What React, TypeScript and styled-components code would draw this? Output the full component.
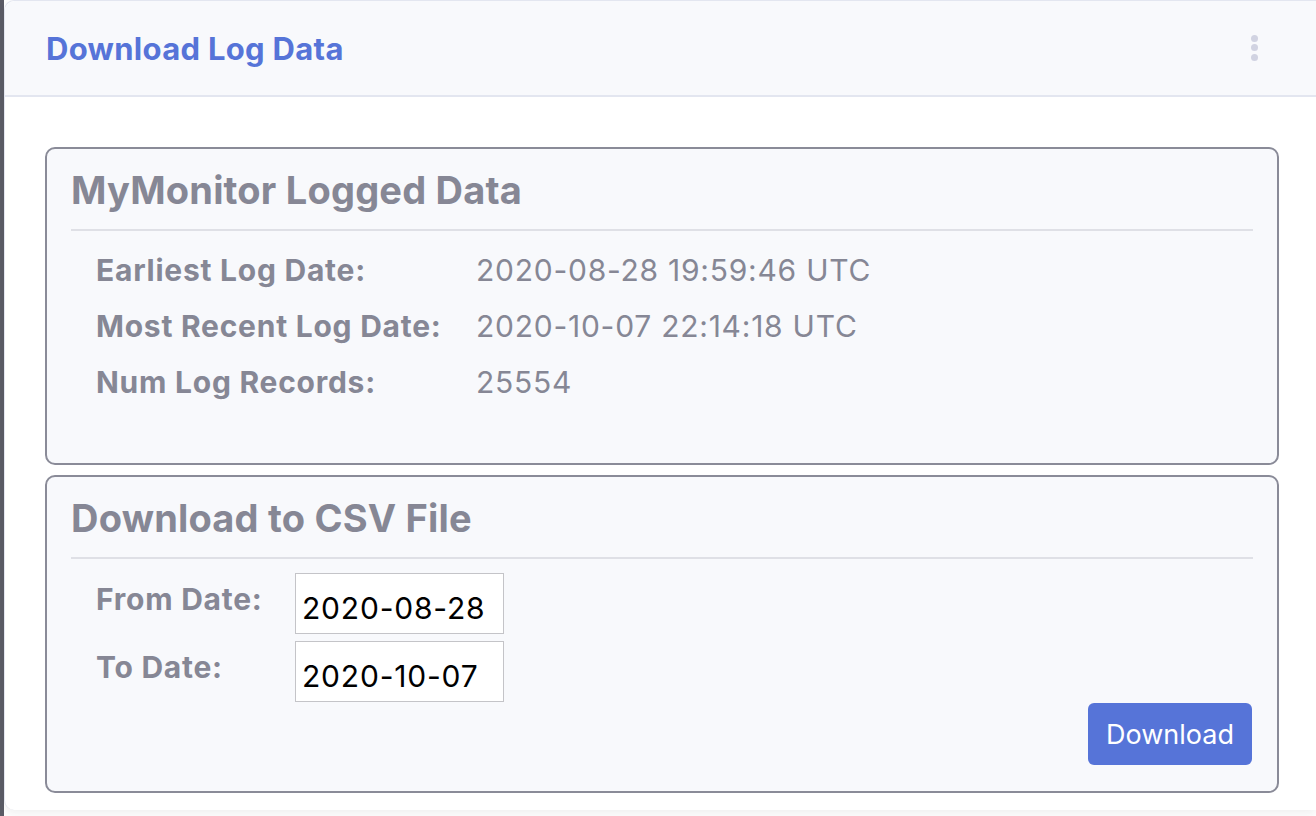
import React from "react";
import styled, { createGlobalStyle } from "styled-components";

const Global = createGlobalStyle`
  html, body { margin: 0; padding: 0; background: #ffffff; }
  body { font-family: Inter, "Noto Sans", sans-serif; -webkit-font-smoothing: antialiased; }
  * { box-sizing: border-box; }
`;

const Page = styled.div`
  display: flex;
  width: 1316px;
  height: 816px;
  overflow: hidden;
  background: #ffffff;
`;

const SideStrip = styled.div`
  width: 4px;
  flex: none;
  background: #5b5c66;
`;

const Card = styled.section`
  flex: 1;
  display: flex;
  flex-direction: column;
  background: #ffffff;
  border-radius: 10px 0 0 10px;
  border-left: 1px solid #e3e6f0;
  border-top: 1px solid #e3e6f0;
  height: 810px;
  box-shadow: 0 4px 10px rgba(58, 59, 69, 0.08);
`;

const CardHeader = styled.header`
  height: 96px;
  flex: none;
  display: flex;
  align-items: center;
  justify-content: space-between;
  padding: 0 58px 0 41px;
  background: #f8f9fc;
  border-bottom: 2px solid #e3e6f0;
  border-top-left-radius: 10px;
`;

const HeaderTitle = styled.h6`
  margin: 0;
  font-size: 31px;
  font-weight: 700;
  color: #5674d8;
  letter-spacing: 0.3px;
`;

const Kebab = styled.div`
  display: flex;
  flex-direction: column;
  gap: 2.5px;
  margin-top: -1px;
`;

const Dot = styled.span`
  width: 7px;
  height: 7px;
  border-radius: 50%;
  background: #d1d3e2;
`;

const CardBody = styled.div`
  display: flex;
  flex-direction: column;
  gap: 10px;
  padding: 50px 37px 12px 40px;
`;

const Panel = styled.div`
  height: 318px;
  border: 2px solid #8a8b98;
  border-radius: 10px;
  background: #f8f9fc;
  padding: 17px 24px 0 24px;
  display: flex;
  flex-direction: column;
`;

const PanelTitle = styled.h4`
  margin: 0;
  font-size: 38px;
  font-weight: 700;
  color: #868795;
  line-height: 48px;
  letter-spacing: 0.2px;
`;

const Rule = styled.hr`
  margin: 15px 0 0;
  border: 0;
  height: 2px;
  background: #dfe0e6;
`;

const InfoList = styled.div`
  display: grid;
  grid-template-columns: 380px 1fr;
  grid-auto-rows: 56px;
  padding: 11px 0 0 25px;
  align-items: center;
`;

const Label = styled.div`
  font-size: 30px;
  font-weight: 700;
  color: #868795;
  letter-spacing: 0.75px;
`;

const Value = styled.div`
  font-size: 30px;
  font-weight: 400;
  color: #868795;
  letter-spacing: 0.75px;
`;

const FormGrid = styled.div`
  display: grid;
  grid-template-columns: 199px 209px;
  row-gap: 7px;
  padding: 14px 0 0 25px;
  align-items: start;
`;

const FormLabel = styled.label`
  font-size: 30px;
  font-weight: 700;
  color: #868795;
  letter-spacing: 0.75px;
  padding-top: 8px;
`;

const DateInput = styled.input`
  width: 209px;
  height: 61px;
  border: 1px solid #c4c4c8;
  background: #ffffff;
  font-family: Inter, "Noto Sans", sans-serif;
  font-size: 30px;
  letter-spacing: 0.8px;
  color: #000000;
  padding: 8px 0 0 6px;
  outline: none;
`;

const Actions = styled.div`
  display: flex;
  justify-content: flex-end;
  margin-top: 1px;
  padding-right: 1px;
`;

const Button = styled.button`
  width: 164px;
  height: 62px;
  border: none;
  border-radius: 6px;
  background: #5674d8;
  color: #ffffff;
  font-family: Inter, "Noto Sans", sans-serif;
  font-size: 27px;
  font-weight: 400;
  cursor: pointer;
`;

const info = [
  ["Earliest Log Date:", "2020-08-28 19:59:46 UTC"],
  ["Most Recent Log Date:", "2020-10-07 22:14:18 UTC"],
  ["Num Log Records:", "25554"],
];

export default function App() {
  return (
    <>
      <Global />
      <Page>
        <SideStrip />
        <Card>
          <CardHeader>
            <HeaderTitle>Download Log Data</HeaderTitle>
            <Kebab>
              <Dot />
              <Dot />
              <Dot />
            </Kebab>
          </CardHeader>
          <CardBody>
            <Panel>
              <PanelTitle>MyMonitor Logged Data</PanelTitle>
              <Rule />
              <InfoList>
                {info.map(([l, v]) => (
                  <React.Fragment key={l}>
                    <Label>{l}</Label>
                    <Value>{v}</Value>
                  </React.Fragment>
                ))}
              </InfoList>
            </Panel>
            <Panel>
              <PanelTitle>Download to CSV File</PanelTitle>
              <Rule />
              <FormGrid>
                <FormLabel htmlFor="from">From Date:</FormLabel>
                <DateInput id="from" type="text" defaultValue="2020-08-28" />
                <FormLabel htmlFor="to">To Date:</FormLabel>
                <DateInput id="to" type="text" defaultValue="2020-10-07" />
              </FormGrid>
              <Actions>
                <Button>Download</Button>
              </Actions>
            </Panel>
          </CardBody>
        </Card>
      </Page>
    </>
  );
}
